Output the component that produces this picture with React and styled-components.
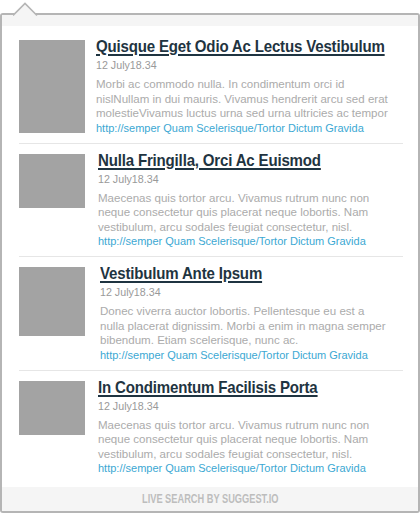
import React from "react";
import styled, { createGlobalStyle } from "styled-components";

const items = [
  {
    title: "Quisque Eget Odio Ac Lectus Vestibulum",
    thumb: 93,
    shift: 0,
    lines: [
      "Morbi ac commodo nulla. In condimentum orci id",
      "nislNullam in dui mauris. Vivamus hendrerit arcu sed erat",
      "molestieVivamus luctus urna sed urna ultricies ac tempor",
    ],
  },
  {
    title: "Nulla Fringilla, Orci Ac Euismod",
    thumb: 54,
    shift: 2,
    lines: [
      "Maecenas quis tortor arcu. Vivamus rutrum nunc non",
      "neque consectetur quis placerat neque lobortis. Nam",
      "vestibulum, arcu sodales feugiat consectetur, nisl.",
    ],
  },
  {
    title: "Vestibulum Ante Ipsum",
    thumb: 69,
    shift: 4,
    lines: [
      "Donec viverra auctor lobortis. Pellentesque eu est a",
      "nulla placerat dignissim. Morbi a enim in magna semper",
      "bibendum. Etiam scelerisque, nunc ac.",
    ],
  },
  {
    title: "In Condimentum Facilisis Porta",
    thumb: 54,
    shift: 2,
    lines: [
      "Maecenas quis tortor arcu. Vivamus rutrum nunc non",
      "neque consectetur quis placerat neque lobortis. Nam",
      "vestibulum, arcu sodales feugiat consectetur, nisl.",
    ],
  },
];

const App = () => {
  return (
    <>
      <GlobalStyle />
      <Panel>
        <Notch width="26" height="16" viewBox="0 0 26 16">
          <polyline
            points="0,14.5 12,2.5 24,14.5"
            fill="#f5f5f5"
            stroke="#b5b5b5"
            strokeWidth="1.6"
          />
        </Notch>
        <TopStrip />
        <List>
          {items.map((item, i) => (
            <Result key={i}>
              <Thumb $height={item.thumb} />
              <Body $shift={item.shift}>
                <TitleLine>
                  <Title href="#">{item.title}</Title>
                </TitleLine>
                <Stamp>12 July18.34</Stamp>
                <Excerpt>
                  {item.lines.map((line) => (
                    <span key={line}>{line}</span>
                  ))}
                </Excerpt>
                <Url href="#">
                  http://semper Quam Scelerisque/Tortor Dictum Gravida
                </Url>
              </Body>
            </Result>
          ))}
        </List>
        <Footer>
          <span>Live search by suggest.io</span>
        </Footer>
      </Panel>
    </>
  );
};

const GlobalStyle = createGlobalStyle`
  * { box-sizing: border-box; }
  body {
    margin: 0;
    background: #ffffff;
    font-family: "Liberation Sans", Arial, sans-serif;
  }
`;

const Panel = styled.div`
  position: relative;
  margin-top: 13px;
  width: 420px;
  height: 500px;
  border: 2px solid #b5b5b5;
  border-radius: 3px;
  background: #ffffff;
  display: flex;
  flex-direction: column;
`;

const Notch = styled.svg`
  position: absolute;
  left: 11px;
  top: -14px;
  display: block;
`;

const TopStrip = styled.div`
  height: 11px;
  background: #f5f5f5;
`;

const List = styled.ul`
  list-style: none;
  margin: 0;
  padding: 4px 15px 0 17px;
  flex: 1;
`;

const Result = styled.li`
  display: flex;
  align-items: flex-start;
  padding: 7px 0;
  border-bottom: 1px solid #e6e6e6;

  &:last-child {
    border-bottom: none;
  }
`;

const Thumb = styled.div`
  flex: none;
  width: 66px;
  height: ${(p) => p.$height}px;
  margin-top: 3px;
  background: #a3a3a3;
`;

const Body = styled.div`
  min-width: 0;
  flex: 1;
  margin-left: ${(p) => 11 + p.$shift}px;
  display: flex;
  flex-direction: column;
  align-items: flex-start;
  white-space: nowrap;
`;

/* no narrow face is installed, so the condensed headline is squeezed */
const TitleLine = styled.div`
  height: 20px;
  width: 100%;
`;

const Title = styled.a`
  display: inline-block;
  font-weight: 700;
  font-size: 17px;
  line-height: 20px;
  letter-spacing: -0.2px;
  color: #1f3441;
  text-decoration: underline;
  text-decoration-thickness: 1.5px;
  text-underline-offset: 2px;
  transform: scaleX(0.885);
  transform-origin: left center;
`;

const Stamp = styled.div`
  font-size: 10.7px;
  line-height: 16px;
  color: #999999;
`;

const Excerpt = styled.p`
  margin: 4px 0 0;
  font-size: 11.55px;
  line-height: 14.5px;
  color: #ababab;
  display: flex;
  flex-direction: column;
`;

const Url = styled.a`
  font-size: 11px;
  line-height: 15px;
  color: #3ba8d3;
  text-decoration: none;
`;

const Footer = styled.div`
  height: 24px;
  background: #f5f5f5;
  display: flex;
  align-items: center;
  justify-content: center;

  span {
    display: inline-block;
    font-weight: 700;
    font-size: 12.5px;
    text-transform: uppercase;
    color: #bdbdbd;
    transform: scaleX(0.74);
  }
`;

export default App;
